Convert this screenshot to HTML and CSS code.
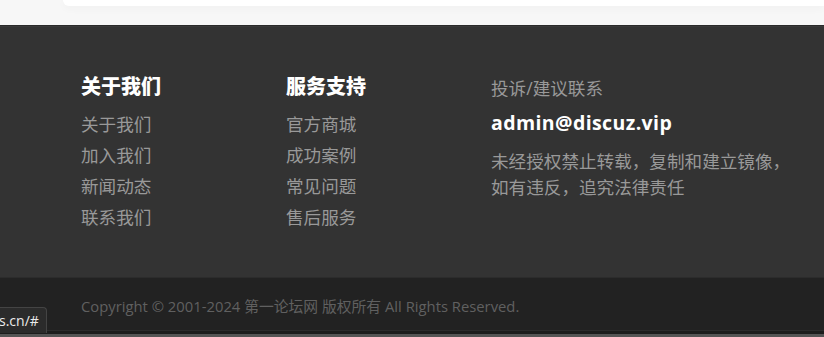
FILE: index.html
```html
<!DOCTYPE html>
<html lang="zh-CN">
<head>
<meta charset="utf-8">
<title>Footer</title>
<link rel="stylesheet" href="styles.css">
</head>
<body>
<div class="top">
  <div class="card"></div>
</div>
<footer class="footer">
  <div class="cols">
    <div class="col">
      <h3 class="col-title">关于我们</h3>
      <ul class="links">
        <li><a href="#">关于我们</a></li>
        <li><a href="#">加入我们</a></li>
        <li><a href="#">新闻动态</a></li>
        <li><a href="#">联系我们</a></li>
      </ul>
    </div>
    <div class="col">
      <h3 class="col-title">服务支持</h3>
      <ul class="links">
        <li><a href="#">官方商城</a></li>
        <li><a href="#">成功案例</a></li>
        <li><a href="#">常见问题</a></li>
        <li><a href="#">售后服务</a></li>
      </ul>
    </div>
    <div class="col col-contact">
      <p class="contact-label">投诉/建议联系</p>
      <p class="contact-mail">admin@discuz.vip</p>
      <p class="contact-note">未经授权禁止转载，复制和建立镜像，如有违反，追究法律责任</p>
    </div>
  </div>
</footer>
<div class="copyright">
  <p class="copy-text">Copyright © 2001-2024 第一论坛网 版权所有 All Rights Reserved.</p>
</div>
<div class="edge"></div>
<div class="status">s.cn/#</div>
</body>
</html>
```

FILE: styles.css
```css
html, body {
  margin: 0;
  padding: 0;
}
body {
  background: #f7f7f7;
  font-family: "Open Sans", "Noto Sans CJK SC", sans-serif;
  height: 337px;
  overflow: hidden;
  position: relative;
}
.top {
  height: 25px;
  background: #f7f7f7;
}
.card {
  margin-left: 63px;
  height: 6px;
  background: #fff;
  border-radius: 0 0 0 6px;
  box-shadow: 0 2px 8px rgba(0,0,0,0.04);
}
.footer {
  background: #333;
  border-top: 1px solid #2a2a2a;
  box-shadow: inset 0 3px 0 -2px #3a3a3a;
  height: 252px;
  box-sizing: border-box;
  padding-top: 49px;
}
.cols {
  display: grid;
  grid-template-columns: 205px 205px 310px;
  margin-left: 81px;
}
.col-title {
  margin: 0;
  font-size: 20px;
  line-height: 24px;
  font-weight: 900;
  color: #fff;
}
.links {
  list-style: none;
  margin: 10px 0 0;
  padding: 0;
}
.links li {
  font-size: 17.6px;
  line-height: 31px;
}
.links a {
  color: #999;
  text-decoration: none;
}
.col-contact p {
  margin: 0;
}
.contact-label {
  font-size: 17.6px;
  line-height: 26px;
  color: #999;
}
.contact-mail {
  margin-top: 9px !important;
  font-size: 19.5px;
  letter-spacing: 0.4px;
  line-height: 26px;
  font-weight: 700;
  color: #fff;
}
.contact-note {
  margin-top: 12px !important;
  font-size: 17.6px;
  line-height: 26px;
  color: #999;
}
.copyright {
  background: #222;
  border-top: 1px solid #2c2c2c;
  border-bottom: 1px solid #2c2c2c;
  height: 54px;
  box-sizing: border-box;
  display: flex;
  align-items: center;
  padding-left: 81px;
}
.copy-text {
  margin: 0;
  font-size: 14.8px;
  color: #606060;
  padding-top: 3px;
}
.edge {
  height: 3px;
  background: #1d1d1d;
  border-bottom: 3px solid #555;
}
.status {
  position: absolute;
  left: 0;
  bottom: 4px;
  height: 26px;
  width: 47px;
  box-sizing: border-box;
  padding-left: 0;
  background: #2b2b2b;
  border: 1px solid #444;
  border-left: none;
  border-bottom: none;
  border-radius: 0 4px 0 0;
  color: #ececec;
  font-family: "Open Sans", sans-serif;
  font-size: 14px;
  line-height: 25px;
  overflow: hidden;
  white-space: nowrap;
  text-indent: -1px;
}
```
